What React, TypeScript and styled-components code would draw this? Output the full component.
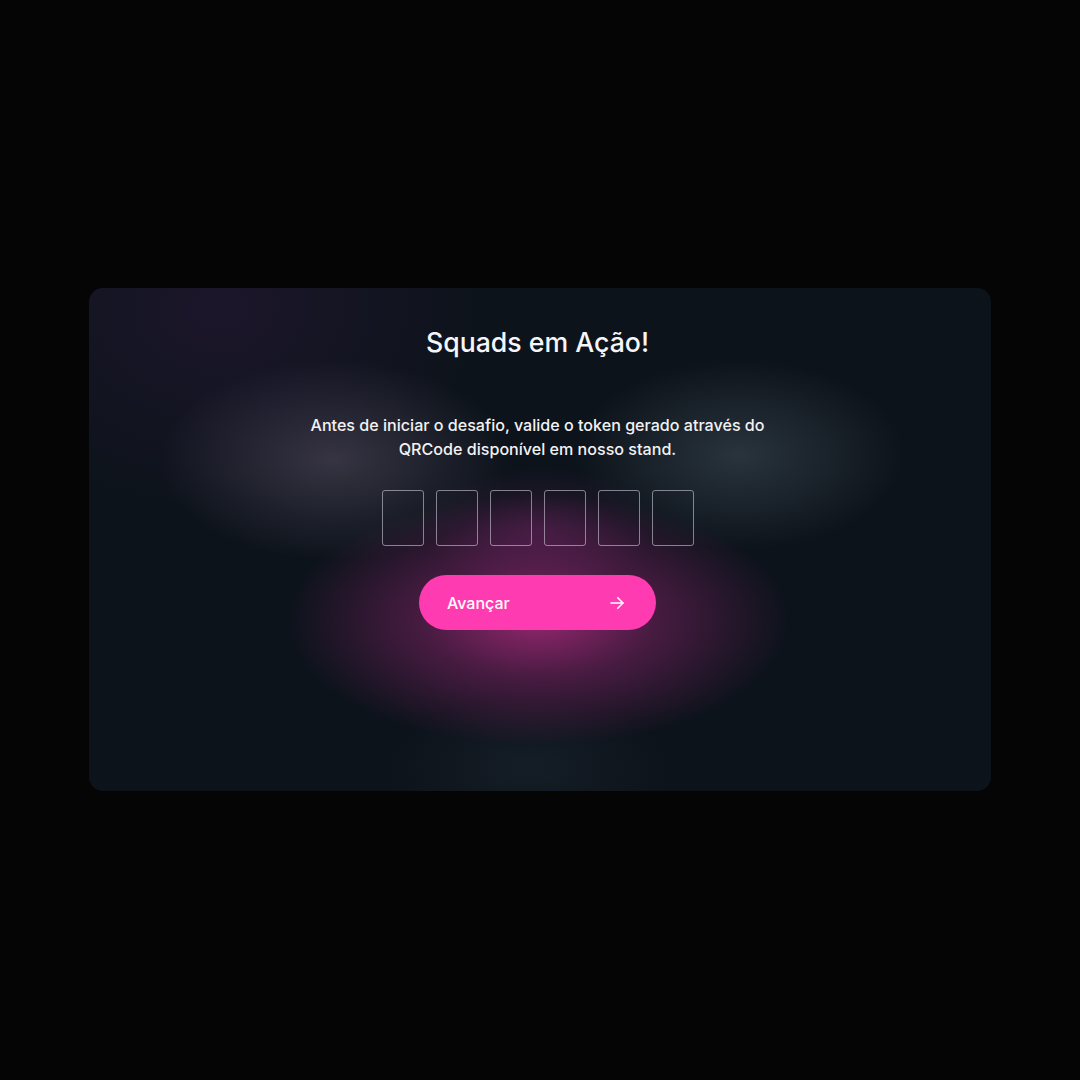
import React from "react";
import styled, { createGlobalStyle } from "styled-components";

const Global = createGlobalStyle`
  html, body { margin: 0; padding: 0; background: #050505; }
  body { font-family: "Inter", "Lato", "Noto Sans", sans-serif; }
`;

const Page = styled.div`
  width: 1080px;
  height: 1080px;
  display: flex;
  align-items: center;
  justify-content: center;
  background: #050505;
`;

const Card = styled.div`
  width: 902px;
  height: 503px;
  box-sizing: border-box;
  margin-top: -1px;
  border-radius: 14px;
  overflow: hidden;
  display: flex;
  flex-direction: column;
  align-items: center;
  padding: 37px 5px 0 0;
  background:
    radial-gradient(ellipse 250px 125px at 449px 332px, rgba(255, 55, 175, 0.55) 0%, rgba(200, 45, 150, 0.32) 45%, rgba(120, 30, 100, 0) 100%),
    radial-gradient(ellipse 120px 60px at 449px 240px, rgba(120, 40, 110, 0.3), rgba(120, 40, 110, 0) 100%),
    radial-gradient(ellipse 175px 100px at 245px 172px, rgba(125, 110, 135, 0.36), rgba(125, 110, 135, 0) 100%),
    radial-gradient(ellipse 165px 95px at 650px 167px, rgba(95, 115, 125, 0.34), rgba(95, 115, 125, 0) 100%),
    radial-gradient(ellipse 260px 200px at 130px 20px, rgba(40, 25, 55, 0.55), rgba(40, 25, 55, 0) 100%),
    radial-gradient(ellipse 140px 70px at 440px 480px, rgba(40, 55, 65, 0.28), rgba(40, 55, 65, 0) 100%),
    #0d131b;
`;

const Title = styled.h1`
  margin: 0;
  font-size: 26.7px;
  line-height: 34px;
  font-weight: 500;
  color: #f4f6fb;
  letter-spacing: 0;
`;

const Description = styled.p`
  margin: 54px 0 0;
  width: 480px;
  text-align: center;
  font-size: 16.1px;
  line-height: 24px;
  font-weight: 500;
  color: #f2f2f5;
  letter-spacing: 0;
`;

const TokenRow = styled.div`
  margin-top: 29px;
  display: flex;
  gap: 12px;
`;

const TokenBox = styled.input`
  width: 42px;
  height: 56px;
  box-sizing: border-box;
  border: 1.5px solid rgba(200, 195, 210, 0.62);
  border-radius: 3px;
  background: transparent;
  padding: 0;
  color: #fff;
  font-size: 22px;
  text-align: center;
  outline: none;
`;

const Button = styled.button`
  margin-top: 29px;
  width: 237px;
  height: 55px;
  border: none;
  border-radius: 28px;
  background: #ff3bb2;
  color: #fff;
  display: flex;
  align-items: center;
  justify-content: space-between;
  padding: 0 30px 0 28px;
  box-sizing: border-box;
  font-family: inherit;
  font-size: 16px;
  font-weight: 500;
  cursor: pointer;
`;

const Arrow = () => (
  <svg width="18" height="18" viewBox="0 0 24 24" fill="none" stroke="#fff" strokeWidth="2" strokeLinecap="round" strokeLinejoin="round">
    <path d="M4 12h16" />
    <path d="M13 5l7 7-7 7" />
  </svg>
);

export default function App() {
  return (
    <>
      <Global />
      <Page>
        <Card>
          <Title>Squads em Ação!</Title>
          <Description>
            Antes de iniciar o desafio, valide o token gerado através do QRCode disponível em nosso stand.
          </Description>
          <TokenRow>
            {[0, 1, 2, 3, 4, 5].map((i) => (
              <TokenBox key={i} maxLength={1} />
            ))}
          </TokenRow>
          <Button>
            <span>Avançar</span>
            <Arrow />
          </Button>
        </Card>
      </Page>
    </>
  );
}
